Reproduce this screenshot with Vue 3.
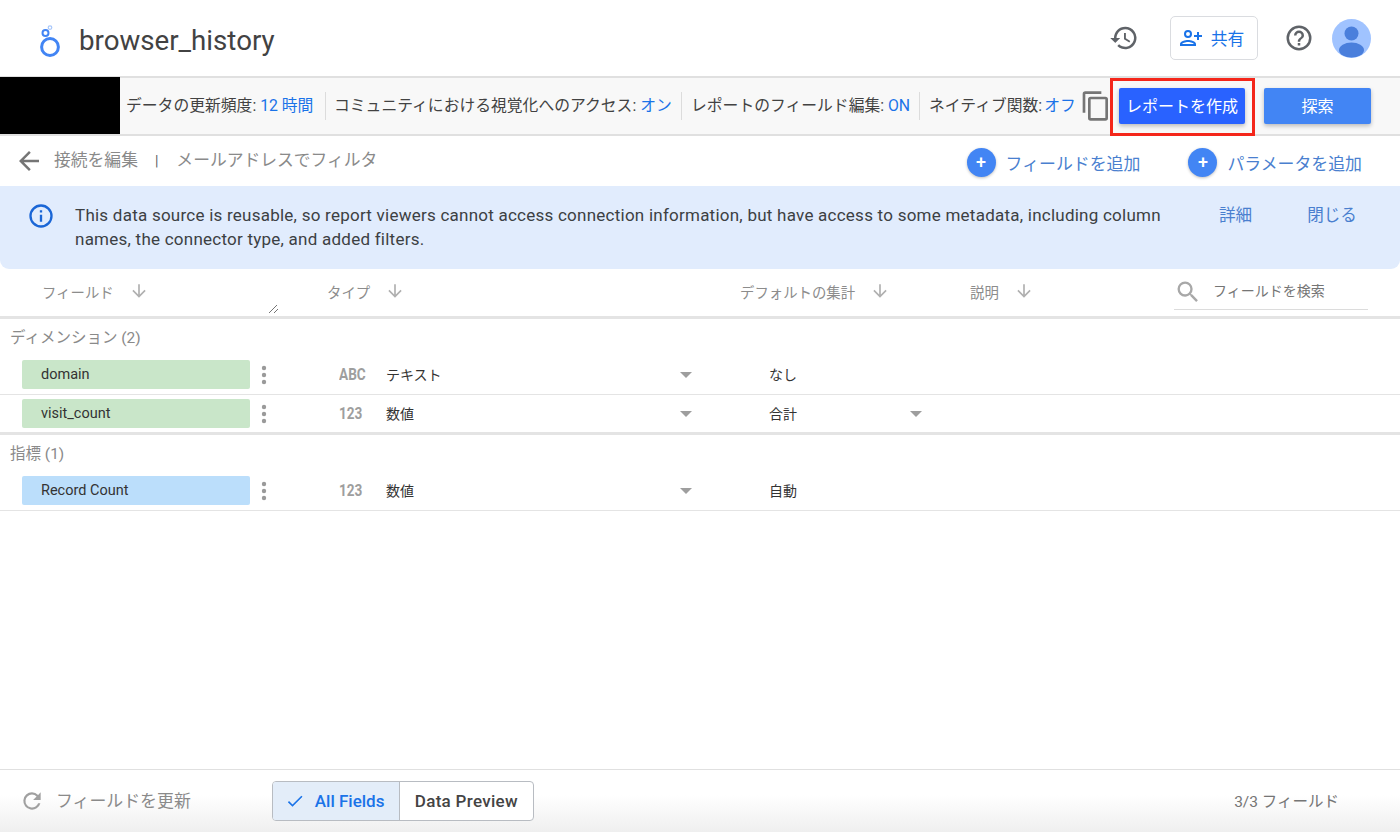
<script setup>
const toolbarItems = [
    { label: 'データの更新頻度:', value: '12 時間', cls: 's1' },
    { label: 'コミュニティにおける視覚化へのアクセス:', value: 'オン', cls: 's2' },
    { label: 'レポートのフィールド編集:', value: 'ON', cls: 's3' }
];

const columns = [
    { label: 'フィールド', cls: 'col-field' },
    { label: 'タイプ', cls: 'col-type' },
    { label: 'デフォルトの集計', cls: 'col-agg' },
    { label: '説明', cls: 'col-desc' }
];

const sections = [
    {
        title: 'ディメンション (2)',
        kind: 'dim',
        rows: [
            { name: 'domain', icon: 'ABC', type: 'テキスト', agg: 'なし', aggMenu: false },
            { name: 'visit_count', icon: '123', type: '数値', agg: '合計', aggMenu: true, end: true }
        ]
    },
    {
        title: '指標 (1)',
        kind: 'metric',
        rows: [
            { name: 'Record Count', icon: '123', type: '数値', agg: '自動', aggMenu: false }
        ]
    }
];
</script>

<template>
    <div class="page">
        <header class="top">
            <svg class="logo" width="26" height="34" viewBox="0 0 26 34">
                <circle cx="13" cy="22" r="8.400" fill="none" stroke="#4285f4" stroke-width="3" />
                <circle cx="8.500" cy="8" r="3" fill="none" stroke="#4285f4" stroke-width="2" />
                <circle cx="13" cy="2.600" r="1.800" fill="none" stroke="#a8c7fa" stroke-width="1.200" />
            </svg>
            <span class="title">browser_history</span>
            <div class="top-actions">
                <svg class="history" width="30" height="30" viewBox="0 0 24 24">
                    <path fill="#5f6368" d="M13 3a9 9 0 0 0-9 9H1l3.890 3.890.070.140L9 12H6a7 7 0 1 1 2.060 4.940l-1.420 1.420A9 9 0 1 0 13 3zm-1 5v5l4.280 2.540.720-1.210-3.500-2.080V8H12z" />
                </svg>
                <button class="share">
                    <svg width="24" height="24" viewBox="0 0 24 24">
                        <path fill="#1a73e8" d="M9 4a4 4 0 1 0 0 8 4 4 0 0 0 0-8zm0 2a2 2 0 1 1 0 4 2 2 0 0 1 0-4zm0 8c-2.700 0-8 1.300-8 4v2h16v-2c0-2.700-5.300-4-8-4zm-6 4c.200-.700 3.300-2 6-2s5.800 1.300 6 2H3zM20 9V6h-2v3h-3v2h3v3h2v-3h3V9h-3z" />
                    </svg>
                    <span>共有</span>
                </button>
                <svg class="help" width="30" height="30" viewBox="0 0 24 24">
                    <path fill="#5f6368" d="M11 18h2v-2h-2v2zm1-16a10 10 0 1 0 0 20 10 10 0 0 0 0-20zm0 18a8 8 0 1 1 0-16 8 8 0 0 1 0 16zm0-14a4 4 0 0 0-4 4h2a2 2 0 1 1 4 0c0 2-3 1.750-3 5h2c0-2.250 3-2.500 3-5a4 4 0 0 0-4-4z" />
                </svg>
                <svg class="avatar" width="39" height="39" viewBox="0 0 39 39">
                    <circle cx="19.500" cy="19.500" r="19.500" fill="#a0c3ff" />
                    <circle cx="19.500" cy="14.500" r="7" fill="#4a7fdc" />
                    <ellipse cx="19.500" cy="31" rx="12.500" ry="7.500" fill="#4a7fdc" />
                </svg>
            </div>
        </header>

        <section class="toolbar">
            <div class="masked"></div>
            <div class="settings">
                <span v-for="item in toolbarItems" :key="item.label" class="setting" :class="item.cls">
                    {{ item.label }} <b>{{ item.value }}</b>
                </span>
                <span class="setting s4">ネイティブ関数:<b>オフ</b></span>
            </div>
            <svg class="copy" width="32" height="32" viewBox="0 0 24 24">
                <path fill="#757575" d="M16 1H4a2 2 0 0 0-2 2v14h2V3h12V1zm3 4H8a2 2 0 0 0-2 2v14a2 2 0 0 0 2 2h11a2 2 0 0 0 2-2V7a2 2 0 0 0-2-2zm0 16H8V7h11v14z" />
            </svg>
            <button class="btn-create">レポートを作成</button>
            <button class="btn-explore">探索</button>
            <div class="highlight"></div>
        </section>

        <section class="subbar">
            <svg class="back" width="30" height="30" viewBox="0 0 24 24">
                <path fill="#757575" d="M20 11H7.830l5.590-5.590L12 4l-8 8 8 8 1.410-1.410L7.830 13H20v-2z" />
            </svg>
            <span class="crumb">接続を編集</span>
            <span class="crumb-sep">|</span>
            <span class="crumb">メールアドレスでフィルタ</span>
            <div class="add-actions">
                <span class="add"><i class="plus">+</i>フィールドを追加</span>
                <span class="add"><i class="plus">+</i>パラメータを追加</span>
            </div>
        </section>

        <section class="banner">
            <svg class="info" width="28" height="28" viewBox="0 0 24 24">
                <path fill="#1a66d6" d="M11 7h2v2h-2V7zm0 4h2v6h-2v-6zm1-9a10 10 0 1 0 0 20 10 10 0 0 0 0-20zm0 18a8 8 0 1 1 0-16 8 8 0 0 1 0 16z" />
            </svg>
            <p>This data source is reusable, so report viewers cannot access connection information, but have access to some metadata, including column names, the connector type, and added filters.</p>
            <a class="detail">詳細</a>
            <a class="close">閉じる</a>
        </section>

        <section class="thead">
            <div v-for="col in columns" :key="col.label" class="th" :class="col.cls">
                <span>{{ col.label }}</span>
                <svg width="20" height="20" viewBox="0 0 24 24">
                    <path fill="#b0b0b0" d="M20 12l-1.410-1.410L13 16.170V4h-2v12.170l-5.580-5.590L4 12l8 8 8-8z" />
                </svg>
            </div>
            <svg class="resize" width="12" height="10" viewBox="0 0 12 10">
                <path stroke="#757575" stroke-width="1" fill="none" d="M1 9l8-8M6 9l4-4" />
            </svg>
            <div class="search">
                <svg width="28" height="28" viewBox="0 0 24 24">
                    <path fill="#a8a8a8" d="M15.500 14h-.790l-.280-.270A6.470 6.470 0 0 0 16 9.500 6.500 6.500 0 1 0 9.500 16c1.610 0 3.090-.590 4.230-1.570l.270.280v.790l5 4.990L20.490 19l-4.990-5zm-6 0a4.500 4.500 0 1 1 0-9 4.500 4.500 0 0 1 0 9z" />
                </svg>
                <span>フィールドを検索</span>
            </div>
        </section>

        <section v-for="sec in sections" :key="sec.title" class="group">
            <div class="group-title">{{ sec.title }}</div>
            <div v-for="row in sec.rows" :key="row.name" class="row" :class="{ end: row.end }">
                <div class="chip" :class="sec.kind">{{ row.name }}</div>
                <svg class="dots" width="6" height="20" viewBox="0 0 6 20">
                    <circle cx="3" cy="3" r="2.200" fill="#9a9a9a" />
                    <circle cx="3" cy="10" r="2.200" fill="#9a9a9a" />
                    <circle cx="3" cy="17" r="2.200" fill="#9a9a9a" />
                </svg>
                <span class="type-icon">{{ row.icon }}</span>
                <span class="type-name">{{ row.type }}</span>
                <i class="caret"></i>
                <span class="agg-name">{{ row.agg }}</span>
                <i v-if="row.aggMenu" class="caret"></i>
            </div>
        </section>

        <footer class="bottom">
            <svg class="refresh" width="26" height="26" viewBox="0 0 24 24">
                <path fill="#a0a0a0" d="M17.650 6.350A8 8 0 0 0 12 4a8 8 0 1 0 7.730 10h-2.080A6 6 0 1 1 12 6c1.660 0 3.140.690 4.220 1.780L13 11h7V4l-2.350 2.350z" />
            </svg>
            <span class="refresh-label">フィールドを更新</span>
            <div class="toggle">
                <span class="tab on">
                    <svg width="20" height="20" viewBox="0 0 24 24">
                        <path fill="#1a73e8" d="M9 16.170L4.830 12l-1.420 1.410L9 19 21 7l-1.410-1.410z" />
                    </svg>
                    All Fields
                </span>
                <span class="tab">Data Preview</span>
            </div>
            <span class="count">3/3 フィールド</span>
        </footer>
    </div>
</template>

<style scoped>
.page {
    width: 1400px;
    height: 832px;
    display: flex;
    flex-direction: column;
    position: relative;
    overflow: hidden;
    background: #fff;
    font-family: Roboto, "Noto Sans CJK JP", sans-serif;
    color: #3c4043;
}

.top {
    height: 76px;
    flex: none;
    display: flex;
    align-items: center;
    padding-left: 37px;
    box-sizing: border-box;
}

.logo {
    margin-top: 8px;
}

.title {
    margin-left: 16px;
    margin-top: 4px;
    font-size: 27.700px;
    color: #424242;
}

.top-actions {
    margin-left: auto;
    display: flex;
    align-items: center;
    padding-right: 29px;
}

.share {
    width: 88px;
    height: 44px;
    margin: 0 26px 0 31px;
    padding: 0 5px 0 0;
    display: flex;
    align-items: center;
    justify-content: center;
    gap: 8px;
    background: #fff;
    border: 1px solid #dadce0;
    border-radius: 5px;
    font: 16.800px Roboto, "Noto Sans CJK JP", sans-serif;
    color: #1a73e8;
}

.avatar {
    margin-left: 18px;
}

.toolbar {
    height: 60px;
    flex: none;
    box-sizing: border-box;
    display: flex;
    align-items: center;
    position: relative;
    background: #f8f8f8;
    border-top: 2px solid #e0e0e0;
    border-bottom: 2px solid #e0e0e0;
}

.masked {
    width: 120px;
    height: 57px;
    margin-top: -1px;
    background: #000;
    flex: none;
}

.settings {
    display: flex;
    align-items: center;
    font-size: 15.800px;
    color: #424242;
    white-space: nowrap;
}

.setting {
    height: 28px;
    line-height: 28px;
    box-sizing: border-box;
    padding-left: 8px;
    border-right: 1px solid #dcdcdc;
}

.s1 {
    width: 206px;
    padding-left: 6px;
}

.s2 {
    width: 356px;
}

.s3 {
    width: 238px;
    padding-left: 9px;
}

.s4 {
    width: 160px;
    padding-left: 9px;
    border-right: 0;
}

.s4 b {
    margin-left: 2px;
}

.setting b {
    font-weight: 400;
    color: #1a73e8;
}

.copy {
    flex: none;
}

.btn-create,
.btn-explore {
    height: 36px;
    padding: 0 0 3px;
    border: 0;
    border-radius: 2px;
    color: #fff;
    font: 16px Roboto, "Noto Sans CJK JP", sans-serif;
    box-shadow: 0 2px 4px rgba(0, 0, 0, 0.25);
}

.btn-create {
    width: 126px;
    margin-left: 7px;
    background: #2962ff;
}

.btn-explore {
    width: 107px;
    margin-left: 19px;
    background: #4285f4;
}

.highlight {
    position: absolute;
    left: 1110px;
    top: 0;
    width: 145px;
    height: 58px;
    box-sizing: border-box;
    border: 3px solid #f4261a;
}

.subbar {
    height: 50px;
    flex: none;
    display: flex;
    align-items: center;
    padding-left: 14px;
    box-sizing: border-box;
    font-size: 16.800px;
    color: #8a8a8a;
}

.crumb {
    position: relative;
    top: -2px;
}

.back {
    margin-right: 10px;
}

.crumb-sep {
    margin: 0 18px 0 17px;
    font-size: 14px;
    color: #616161;
}

.add-actions {
    margin-left: auto;
    display: flex;
    gap: 48px;
    padding-right: 38px;
    padding-top: 3px;
}

.add {
    display: flex;
    align-items: center;
    gap: 10px;
    font-size: 16.900px;
    color: #4a7fcf;
}

.plus {
    width: 29px;
    height: 29px;
    border-radius: 50%;
    background: #4285f4;
    color: #fff;
    font: 500 18px/28px Roboto, sans-serif;
    text-align: center;
    box-shadow: 0 1px 3px rgba(0, 0, 0, 0.25);
}

.banner {
    height: 83px;
    flex: none;
    box-sizing: border-box;
    display: flex;
    align-items: flex-start;
    background: #e1ecfd;
    border-radius: 0 0 9px 9px;
    padding: 16px 0 0 27px;
    position: relative;
}

.banner p {
    width: 1092px;
    margin: 1px 0 0 20px;
    font-size: 17px;
    line-height: 24px;
    letter-spacing: 0.240px;
    color: #3c4043;
}

.banner a {
    color: #4a7fcf;
    font-size: 16.600px;
    line-height: 28px;
}

.detail {
    margin-left: 52px;
}

.close {
    margin-left: 55px;
}

.thead {
    height: 50px;
    flex: none;
    box-sizing: border-box;
    display: flex;
    align-items: flex-start;
    position: relative;
    border-bottom: 3px solid #e4e4e4;
    padding-top: 11px;
    font-size: 14.400px;
    color: #8c8c8c;
}

.th {
    display: flex;
    align-items: center;
    height: 22px;
    flex: none;
    gap: 15px;
}

.col-field {
    margin-left: 42px;
    width: 285px;
}

.col-type {
    width: 413px;
}

.col-agg {
    width: 230px;
}

.resize {
    position: absolute;
    left: 268px;
    top: 35px;
}

.search {
    position: absolute;
    left: 1174px;
    top: 5px;
    width: 194px;
    height: 36px;
    box-sizing: border-box;
    display: flex;
    align-items: center;
    gap: 11px;
    border-bottom: 1px solid #dcdcdc;
    font-size: 14px;
    color: #757575;
}

.search span {
    position: relative;
    top: -2px;
}

.group-title {
    height: 37px;
    line-height: 38px;
    padding-left: 10px;
    font-size: 15.500px;
    color: #8a8a8a;
}

.row {
    height: 39px;
    box-sizing: border-box;
    display: flex;
    align-items: center;
    border-bottom: 1px solid #e4e4e4;
    padding: 0 0 1px 22px;
    font-size: 14px;
    color: #333;
}

.row.end {
    height: 40px;
    padding-bottom: 0;
    border-bottom: 3px solid #e4e4e4;
}

.chip {
    width: 228px;
    height: 29px;
    box-sizing: border-box;
    padding-left: 19px;
    line-height: 29px;
    font-size: 14.500px;
    border-radius: 2px;
    flex: none;
}

.chip.dim {
    background: #c9e6c9;
}

.chip.metric {
    background: #bbdefb;
}

.dots {
    margin-left: 11px;
    flex: none;
}

.type-icon {
    margin-left: 72px;
    width: 26px;
    font: 700 16px Roboto, sans-serif;
    white-space: nowrap;
    color: #9e9e9e;
    transform: scaleX(0.85);
    transform-origin: left;
}

.type-name {
    margin-left: 21px;
    width: 294px;
    position: relative;
    top: -1px;
}

.caret {
    width: 0;
    height: 0;
    flex: none;
    border-left: 6px solid transparent;
    border-right: 6px solid transparent;
    border-top: 6px solid #9e9e9e;
}

.agg-name {
    margin-left: 77px;
    width: 141px;
    position: relative;
    top: -1px;
}

.bottom {
    margin-top: auto;
    height: 63px;
    flex: none;
    box-sizing: border-box;
    display: flex;
    align-items: center;
    border-top: 1px solid #e0e0e0;
    background: linear-gradient(#fff 40%, #efefef);
    padding-left: 19px;
}

.refresh-label {
    margin-left: 11px;
    font-size: 16.900px;
    color: #8a8a8a;
    position: relative;
    top: -2px;
}

.toggle {
    margin-left: 81px;
    display: flex;
    height: 40px;
    box-sizing: border-box;
    border: 1px solid #b8bcc2;
    border-radius: 4px;
    overflow: hidden;
    font-size: 17px;
    font-weight: 500;
    background: #fff;
}

.tab {
    display: flex;
    align-items: center;
    padding: 0 15px;
    color: #444;
    letter-spacing: 0.300px;
}

.tab.on {
    width: 127px;
    box-sizing: border-box;
    gap: 10px;
    padding: 0 0 0 12px;
    background: #e3edf9;
    border-right: 1px solid #b8bcc2;
    color: #1a73e8;
    letter-spacing: 0;
}

.count {
    margin-left: auto;
    padding-right: 61px;
    font-size: 15.500px;
    color: #757575;
    position: relative;
    top: -1px;
}
</style>

<style>
html, body {
    margin: 0;
    background: #fff;
}
</style>
